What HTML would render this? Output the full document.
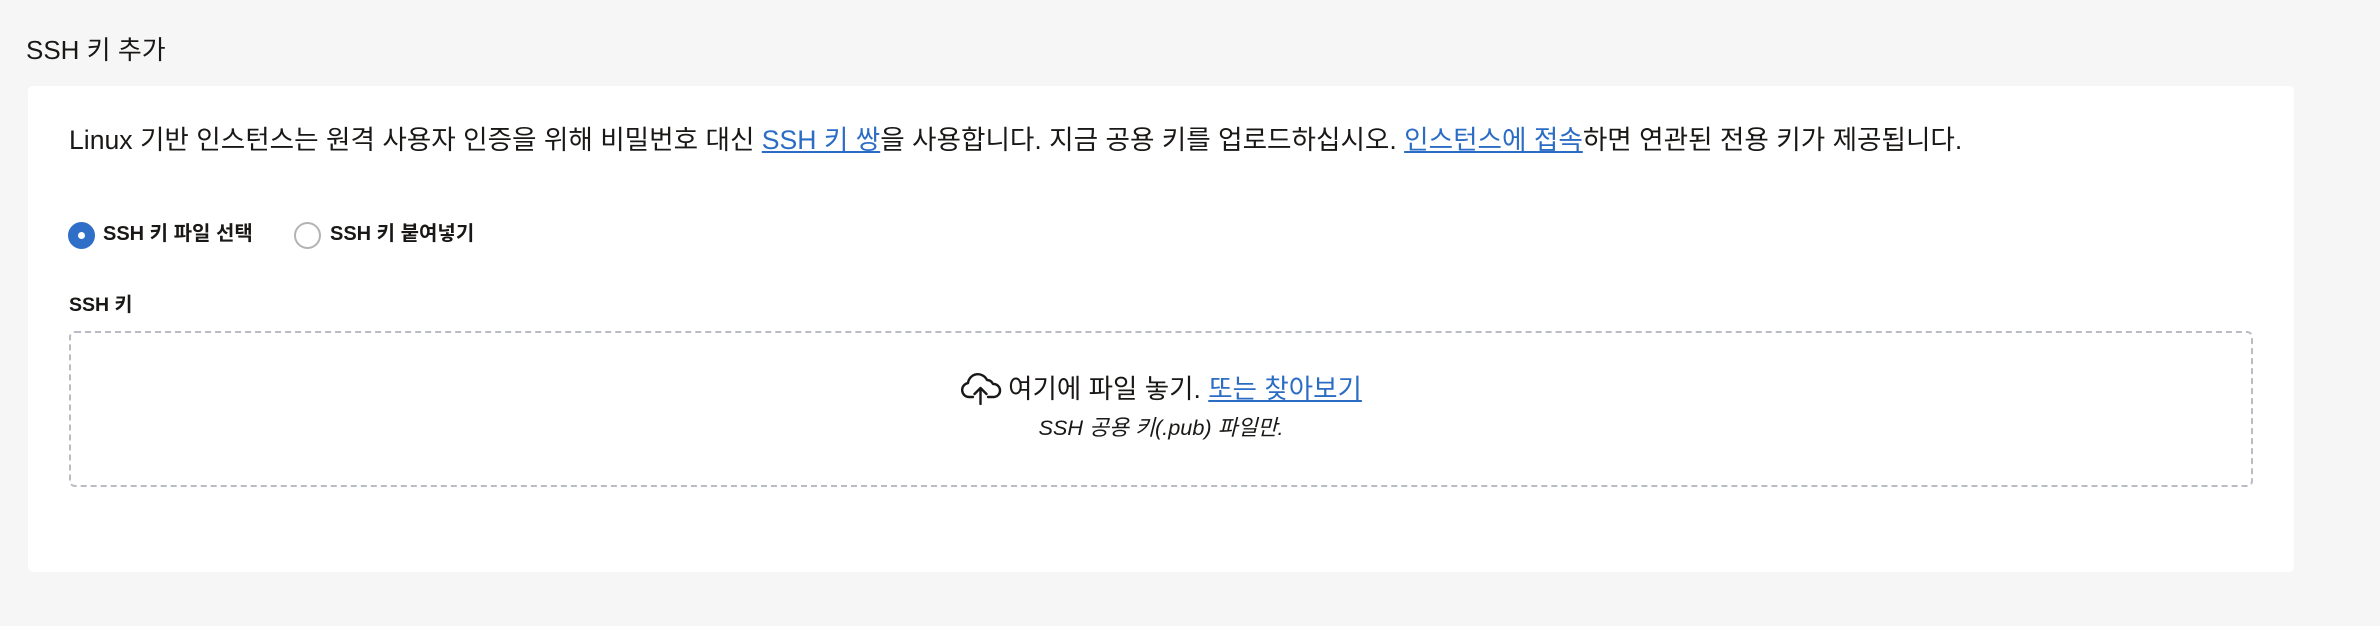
<!DOCTYPE html>
<html><head><meta charset="utf-8"><style>
html,body{margin:0;padding:0;}
body{width:2380px;height:626px;background:#f6f6f6;font-family:"Liberation Sans","Noto Sans CJK KR",sans-serif;color:#1a1816;position:relative;overflow:hidden;}
.title{position:absolute;left:26px;top:32px;font-size:26px;line-height:36px;}
.card{position:absolute;left:28px;top:86px;width:2266px;height:486px;background:#fff;border-radius:5px;}
.desc{position:absolute;left:69px;top:122px;font-size:26.6px;line-height:36px;white-space:nowrap;}
a{color:#2b6cc4;text-decoration:underline;}
.radio{position:absolute;top:222px;width:23px;height:23px;border-radius:50%;}
.r1{left:68px;background:#2f6fc8;border:2px solid #2f6fc8;}
.r1::after{content:"";position:absolute;left:8px;top:8px;width:7px;height:7px;border-radius:50%;background:#fff;}
.r2{left:294px;border:2px solid #b3b3b3;background:#fff;}
.rl{position:absolute;top:219px;font-size:20px;line-height:30px;font-weight:bold;}
.lab{position:absolute;left:69px;top:291px;font-size:19.5px;line-height:28px;font-weight:bold;}
.drop{position:absolute;left:69px;top:331px;width:2180px;height:152px;border:2px dashed #b9bcc2;border-radius:6px;}
.main{position:absolute;left:69px;width:2184px;text-align:center;top:371px;font-size:26.5px;line-height:36px;white-space:nowrap;}
.sub{position:absolute;left:69px;width:2184px;text-align:center;top:413px;font-size:21.7px;line-height:30px;font-style:italic;}
</style></head><body>
<div class="title">SSH 키 추가</div>
<div class="card"></div>
<div class="desc">Linux 기반 인스턴스는 원격 사용자 인증을 위해 비밀번호 대신 <a>SSH 키 쌍</a>을 사용합니다. 지금 공용 키를 업로드하십시오. <a>인스턴스에 접속</a>하면 연관된 전용 키가 제공됩니다.</div>
<div class="radio r1"></div><div class="rl" style="left:103px">SSH 키 파일 선택</div>
<div class="radio r2"></div><div class="rl" style="left:330px">SSH 키 붙여넣기</div>
<div class="lab">SSH 키</div>
<div class="drop"></div>
<div class="main"><svg width="42" height="34" viewBox="0 0 42 34" style="vertical-align:-7px;margin-right:6px"><path d="M13 26H9a7 7 0 0 1-1-13.9A10 10 0 0 1 27 9a7 7 0 0 1 6 4 6.5 6.5 0 0 1 1 13h-6" fill="none" stroke="#1a1816" stroke-width="2.4" stroke-linecap="round" stroke-linejoin="round"/><path d="M20.5 33V17M14.5 23l6-6 6 6" fill="none" stroke="#1a1816" stroke-width="2.4" stroke-linecap="round" stroke-linejoin="round"/></svg>여기에 파일 놓기. <a>또는 찾아보기</a></div>
<div class="sub">SSH 공용 키(.pub) 파일만.</div>
</body></html>
